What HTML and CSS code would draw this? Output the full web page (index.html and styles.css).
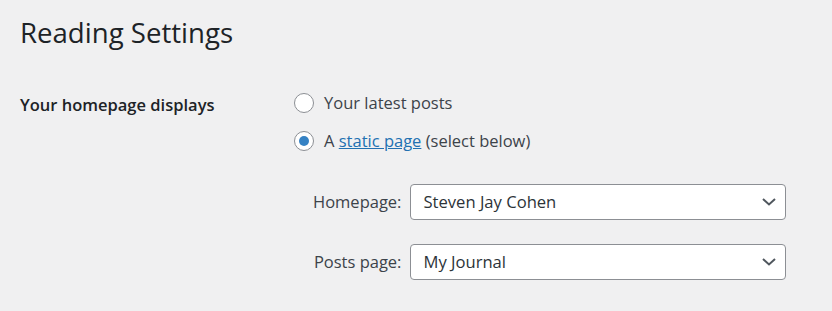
FILE: index.html
```html
<!DOCTYPE html>
<html lang="en">
<head>
    <meta charset="UTF-8">
    <meta name="viewport" content="width=device-width, initial-scale=1.0">
    <title>Reading Settings</title>
    <link rel="stylesheet" href="styles.css">
</head>
<body>
    <div class="wrap">
        <h1>Reading Settings</h1>

        <div class="setting-row">
            <div class="setting-label">Your homepage displays</div>
            <div class="setting-field">
                <label class="radio-option">
                    <input type="radio" name="show_on_front" value="posts">
                    <span>Your latest posts</span>
                </label>
                <label class="radio-option">
                    <input type="radio" name="show_on_front" value="page" checked>
                    <span>A <a href="#">static page</a> (select below)</span>
                </label>

                <div class="page-selects">
                    <label for="page-on-front" class="select-label">Homepage:</label>
                    <span class="select-wrap">
                        <select id="page-on-front" name="page_on_front">
                            <option>Steven Jay Cohen</option>
                        </select>
                        <svg class="chevron" width="14" height="8" viewBox="0 0 14 8">
                            <path d="M1 1l6 5.5L13 1" fill="none" stroke="#50575e" stroke-width="2"/>
                        </svg>
                    </span>

                    <label for="page-for-posts" class="select-label">Posts page:</label>
                    <span class="select-wrap">
                        <select id="page-for-posts" name="page_for_posts">
                            <option>My Journal</option>
                        </select>
                        <svg class="chevron" width="14" height="8" viewBox="0 0 14 8">
                            <path d="M1 1l6 5.5L13 1" fill="none" stroke="#50575e" stroke-width="2"/>
                        </svg>
                    </span>
                </div>
            </div>
        </div>
    </div>
</body>
</html>
```

FILE: styles.css
```css
/* Page */
body {
    margin: 0;
    background-color: #f0f0f1;
    color: #3c434a;
    font-family: "Open Sans", "Noto Sans", sans-serif;
    font-size: 16.5px;
}

.wrap {
    padding: 0 20px;
}

h1 {
    margin: 0;
    padding-top: 15px;
    font-size: 27.6px;
    font-weight: 400;
    line-height: 1.3;
    color: #1d2327;
}

/* Settings row */
.setting-row {
    display: flex;
    margin-top: 41px;
}

.setting-label {
    width: 274px;
    flex-shrink: 0;
    padding-top: 1px;
    font-weight: 600;
    color: #1d2327;
    line-height: 1.4;
}

.setting-field {
    display: flex;
    flex-direction: column;
}

/* Radios */
.radio-option {
    display: flex;
    align-items: center;
    gap: 10px;
    height: 38px;
    margin-top: -8px;
}

.radio-option + .radio-option {
    margin-top: 0;
}

.radio-option input {
    appearance: none;
    margin: 0;
    width: 20px;
    height: 20px;
    border: 1px solid #8c8f94;
    border-radius: 50%;
    background-color: #fff;
    display: flex;
    align-items: center;
    justify-content: center;
    box-sizing: border-box;
}

.radio-option input:checked::before {
    content: "";
    width: 10px;
    height: 10px;
    border-radius: 50%;
    background-color: #3582c4;
}

.radio-option a {
    color: #2271b1;
}

/* Page selects */
.page-selects {
    display: grid;
    grid-template-columns: auto 376px;
    column-gap: 9px;
    row-gap: 24px;
    align-items: center;
    margin: 24px 0 0 19px;
}

.select-label {
    justify-self: end;
}

.select-wrap {
    position: relative;
    display: block;
}

.select-wrap select {
    appearance: none;
    width: 100%;
    height: 36px;
    padding: 0 30px 0 12px;
    border: 1px solid #8c8f94;
    border-radius: 4px;
    background-color: #fff;
    color: #2c3338;
    font-family: inherit;
    font-size: 16.6px;
}

.chevron {
    position: absolute;
    right: 10px;
    top: 14px;
    pointer-events: none;
}
```
